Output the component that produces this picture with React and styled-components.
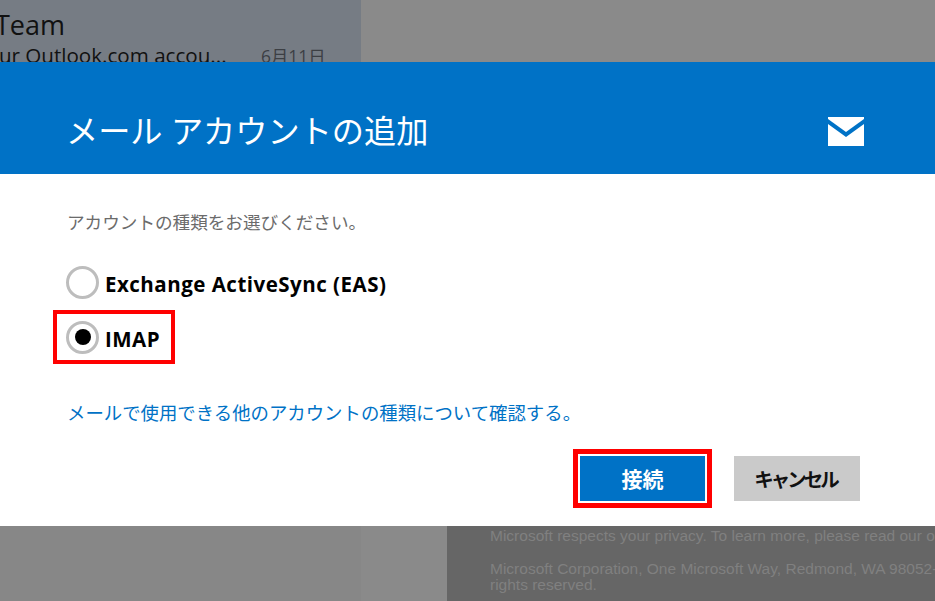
import React from 'react';
import styled, { createGlobalStyle } from 'styled-components';

const GlobalStyle = createGlobalStyle`
  html, body {
    margin: 0;
    padding: 0;
    background: #8a8a8a;
  }
  * {
    box-sizing: border-box;
  }
`;

const jp = `"Open Sans", "Noto Sans CJK JP", sans-serif`;

const Page = styled.div`
  width: 935px;
  height: 601px;
  overflow: hidden;
  display: flex;
  flex-direction: column;
  font-family: ${jp};
`;

const TopStrip = styled.div`
  height: 62px;
  flex: none;
  display: flex;
  background: #8a8a8a;
`;

const MailItem = styled.div`
  width: 361px;
  height: 62px;
  overflow: hidden;
  background: #767c84;
  color: #111;
`;

const MailSender = styled.div`
  margin: 6px 0 0 -5px;
  font-size: 27px;
  line-height: 37px;
  white-space: nowrap;
`;

const MailPreview = styled.div`
  display: flex;
  align-items: baseline;
  margin-left: -25px;
  margin-top: -1px;
  font-size: 20.6px;
  line-height: 27px;
  white-space: nowrap;
`;

const MailSnippet = styled.span`
  width: 286px;
`;

const MailDate = styled.span`
  font-size: 17.4px;
  color: #3c3f44;
`;

const Header = styled.header`
  height: 112px;
  flex: none;
  background: #0072c6;
  display: flex;
  align-items: center;
  justify-content: space-between;
  padding: 26px 71px 0 66px;
  color: #fff;
`;

const Title = styled.h1`
  margin: 0;
  font-size: 32.2px;
  line-height: 44px;
  font-weight: 400;
  white-space: nowrap;
`;

const Body = styled.main`
  height: 352px;
  flex: none;
  background: #fff;
  display: flex;
  flex-direction: column;
  padding: 34px 75px 18px 53px;
`;

const Prompt = styled.p`
  margin: 0 0 0 14px;
  font-size: 17.6px;
  line-height: 28px;
  color: #6b6b6b;
  white-space: nowrap;
`;

const OptionList = styled.div`
  margin-top: 20px;
  display: flex;
  flex-direction: column;
  gap: 2px;
`;

const Option = styled.label`
  display: flex;
  flex: none;
  align-items: center;
  gap: 6px;
  width: ${p => (p.$highlight ? '122px' : 'auto')};
  height: ${p => (p.$highlight ? '54px' : '52px')};
  padding-left: ${p => (p.$highlight ? '9px' : '13px')};
  border: ${p => (p.$highlight ? '4px solid #f00' : '0')};
  font-size: 20.5px;
  font-weight: 700;
  letter-spacing: 0.5px;
  color: #000;
  white-space: nowrap;
`;

const OptionText = styled.span`
  padding-top: 3px;
`;

const Radio = styled.span`
  width: 33px;
  height: 33px;
  flex: none;
  border-radius: 50%;
  border: 3px solid #bdbdbd;
  background: #fff;
  display: flex;
  align-items: center;
  justify-content: center;

  &::after {
    content: '';
    display: ${p => (p.$checked ? 'block' : 'none')};
    width: 16px;
    height: 16px;
    border-radius: 50%;
    background: #000;
  }
`;

const MoreLink = styled.a`
  margin: 35px 0 0 14px;
  font-size: 18.4px;
  line-height: 28px;
  color: #0072c6;
  white-space: nowrap;
`;

const Actions = styled.div`
  margin-top: auto;
  display: flex;
  justify-content: flex-end;
  align-items: center;
  gap: 22px;
`;

const FocusFrame = styled.div`
  width: 139px;
  height: 59px;
  border: 5px solid #f00;
`;

const PrimaryButton = styled.button`
  width: 100%;
  height: 100%;
  margin: 0;
  padding: 0 0 2px;
  border: 2px solid #fff;
  background: #0072c6;
  color: #fff;
  font-family: ${jp};
  font-size: 21px;
  font-weight: 700;
`;

const SecondaryButton = styled.button`
  width: 126px;
  height: 45px;
  margin: 0;
  padding: 0 3px 0 0;
  border: 0;
  background: #cacaca;
  color: #111;
  font-family: ${jp};
  font-size: 19.5px;
  font-weight: 700;
  letter-spacing: -3px;
`;

const BottomStrip = styled.div`
  height: 75px;
  flex: none;
  display: flex;
  background: #8a8a8a;
`;

const ListShade = styled.div`
  width: 361px;
  flex: none;
  background: #878787;
`;

const SideGap = styled.div`
  width: 86px;
  flex: none;
`;

const Legal = styled.div`
  flex: 1;
  overflow: hidden;
  background: #666;
  color: #808080;
  padding: 2px 0 0 43px;
  font-family: "Liberation Sans", Arial, sans-serif;
  font-size: 15.5px;
  line-height: 16px;
  white-space: nowrap;
`;

const LegalLine = styled.div`
  margin-top: ${p => p.$gap || 0}px;
`;

const MailIcon = () => (
  <svg width="36" height="29" viewBox="0 0 36 29">
    <path fill="#fff" d="M0 0H36V2L18 15 0 2Z" />
    <path fill="#fff" d="M0 7L18 20 36 7V29H0Z" />
  </svg>
);

export default function App() {
  return (
    <Page>
      <GlobalStyle />
      <TopStrip>
        <MailItem>
          <MailSender>Team</MailSender>
          <MailPreview>
            <MailSnippet>Your Outlook.com accou...</MailSnippet>
            <MailDate>6月11日</MailDate>
          </MailPreview>
        </MailItem>
      </TopStrip>
      <Header>
        <Title>メール アカウントの追加</Title>
        <MailIcon />
      </Header>
      <Body>
        <Prompt>アカウントの種類をお選びください。</Prompt>
        <OptionList>
          <Option>
            <Radio />
            <OptionText>Exchange ActiveSync (EAS)</OptionText>
          </Option>
          <Option $highlight>
            <Radio $checked />
            <OptionText>IMAP</OptionText>
          </Option>
        </OptionList>
        <MoreLink>メールで使用できる他のアカウントの種類について確認する。</MoreLink>
        <Actions>
          <FocusFrame>
            <PrimaryButton>接続</PrimaryButton>
          </FocusFrame>
          <SecondaryButton>キャンセル</SecondaryButton>
        </Actions>
      </Body>
      <BottomStrip>
        <ListShade />
        <SideGap />
        <Legal>
          <LegalLine>Microsoft respects your privacy. To learn more, please read our online privacy statement.</LegalLine>
          <LegalLine $gap={17}>Microsoft Corporation, One Microsoft Way, Redmond, WA 98052-6399 USA. All</LegalLine>
          <LegalLine>rights reserved.</LegalLine>
        </Legal>
      </BottomStrip>
    </Page>
  );
}
